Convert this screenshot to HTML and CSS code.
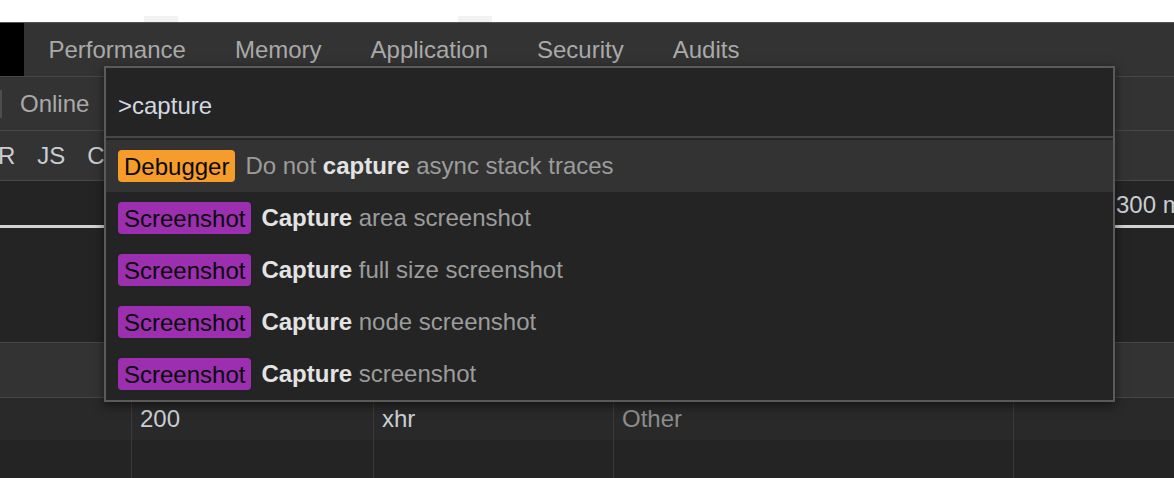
FILE: index.html
```html
<!DOCTYPE html>
<html lang="en">

<head>
    <meta charset="UTF-8">
    <meta name="viewport" content="width=device-width, initial-scale=1.0">
    <title>DevTools - Command Menu</title>
    <link rel="stylesheet" href="styles.css">
</head>

<body>
    <div class="page-strip">
        <div class="strip-tab"></div>
        <div class="strip-tab"></div>
    </div>

    <div class="devtools">
        <div class="tab-bar">
            <div class="tab-corner"></div>
            <div class="tab">Performance</div>
            <div class="tab">Memory</div>
            <div class="tab">Application</div>
            <div class="tab">Security</div>
            <div class="tab">Audits</div>
        </div>

        <div class="toolbar">
            <div class="toolbar-divider"></div>
            <span class="toolbar-item">Online</span>
        </div>

        <div class="filter-bar">
            <span class="filter-item cut">R</span>
            <span class="filter-item">JS</span>
            <span class="filter-item">CS</span>
        </div>

        <div class="overview">
            <span class="tick-label">300 ms</span>
            <div class="overview-line"></div>
        </div>

        <div class="net-header"></div>

        <div class="net-grid">
            <div class="net-cell"></div>
            <div class="net-cell">200</div>
            <div class="net-cell">xhr</div>
            <div class="net-cell dim">Other</div>
            <div class="net-cell"></div>

            <div class="net-cell alt"></div>
            <div class="net-cell alt"></div>
            <div class="net-cell alt"></div>
            <div class="net-cell alt"></div>
            <div class="net-cell alt"></div>
        </div>

        <!-- command menu overlay -->
        <div class="command-menu">
            <div class="command-input">&gt;capture</div>
            <div class="command-list">
                <div class="command-row selected">
                    <span class="badge debugger">Debugger</span>
                    <span class="command-text">Do not <b>capture</b> async stack traces</span>
                </div>
                <div class="command-row">
                    <span class="badge screenshot">Screenshot</span>
                    <span class="command-text"><b>Capture</b> area screenshot</span>
                </div>
                <div class="command-row">
                    <span class="badge screenshot">Screenshot</span>
                    <span class="command-text"><b>Capture</b> full size screenshot</span>
                </div>
                <div class="command-row">
                    <span class="badge screenshot">Screenshot</span>
                    <span class="command-text"><b>Capture</b> node screenshot</span>
                </div>
                <div class="command-row">
                    <span class="badge screenshot">Screenshot</span>
                    <span class="command-text"><b>Capture</b> screenshot</span>
                </div>
            </div>
        </div>
    </div>
</body>

</html>
```

FILE: styles.css
```css
body {
    margin: 0;
    font-family: "Liberation Sans", Arial, sans-serif;
    font-size: 24px;
    background: #242424;
    color: #c9ced4;
    height: 478px;
    overflow: hidden;
}

.page-strip {
    height: 22px;
    background: #fff;
    display: flex;
    align-items: flex-end;
    gap: 280px;
    padding-left: 144px;
}

.strip-tab {
    width: 34px;
    height: 6px;
    background: #f1f2f4;
}

.devtools {
    position: relative;
    border-top: 1px solid #555;
}

.tab-bar {
    display: flex;
    height: 53px;
    background: #333;
    border-bottom: 1px solid #474747;
}

.tab-corner {
    width: 24px;
    background: #000;
}

.tab {
    padding: 0 24.5px;
    line-height: 53px;
    color: #a9a9a9;
}

.tab:first-of-type {
    padding-left: 24px;
}

.toolbar {
    display: flex;
    align-items: center;
    height: 53px;
    background: #333;
    border-bottom: 1px solid #474747;
}

.toolbar-divider {
    width: 2px;
    height: 28px;
    background: #4d4d4d;
    margin-right: 18px;
}

.toolbar-item {
    color: #a9a9a9;
}

.filter-bar {
    display: flex;
    align-items: center;
    gap: 22px;
    height: 49px;
    background: #333;
    border-bottom: 1px solid #474747;
    white-space: nowrap;
}

.filter-item {
    color: #c9ced4;
}

.filter-item.cut {
    margin-left: -2px;
}

.overview {
    position: relative;
    height: 161px;
}

.tick-label {
    position: absolute;
    left: 1116px;
    top: 10px;
    white-space: nowrap;
}

.overview-line {
    position: absolute;
    left: 0;
    right: 0;
    top: 44px;
    height: 3px;
    background: #d2d2d2;
}

.net-header {
    height: 54px;
    background: #333;
    border-top: 1px solid #474747;
    border-bottom: 1px solid #474747;
}

.net-grid {
    display: grid;
    grid-template-columns: 131px 242px 240px 400px 1fr;
    grid-template-rows: 42px 38px;
}

.net-cell {
    background: #292929;
    border-left: 1px solid #3a3a3a;
    padding-left: 8px;
    line-height: 42px;
}

.net-cell:first-child {
    border-left: none;
}

.net-cell.alt {
    background: #242424;
}

.net-cell.alt:nth-child(6) {
    border-left: none;
}

.net-cell.dim {
    color: #8c8c8c;
}

.command-menu {
    position: absolute;
    left: 104px;
    top: 43px;
    width: 1007px;
    background: #242424;
    border: 2px solid #5a5a5a;
    box-shadow: 0 3px 10px rgba(0, 0, 0, 0.55);
}

.command-input {
    height: 68px;
    line-height: 75px;
    padding-left: 12px;
    color: #d3d9e0;
    border-bottom: 2px solid #474747;
}

.command-list {
    padding-top: 2px;
}

.command-row {
    display: flex;
    align-items: center;
    gap: 10px;
    height: 52px;
    padding-left: 12px;
}

.command-row.selected {
    background: #333;
}

.badge {
    height: 32px;
    line-height: 34px;
    padding: 0 6px;
    border-radius: 4px;
    color: #0a0a0a;
}

.badge.debugger {
    background: #f59c2b;
}

.badge.screenshot {
    background: #9b2faf;
}

.command-text {
    color: #9c9c9c;
    line-height: 54px;
}

.command-text b {
    color: #e3e3e3;
}
```
